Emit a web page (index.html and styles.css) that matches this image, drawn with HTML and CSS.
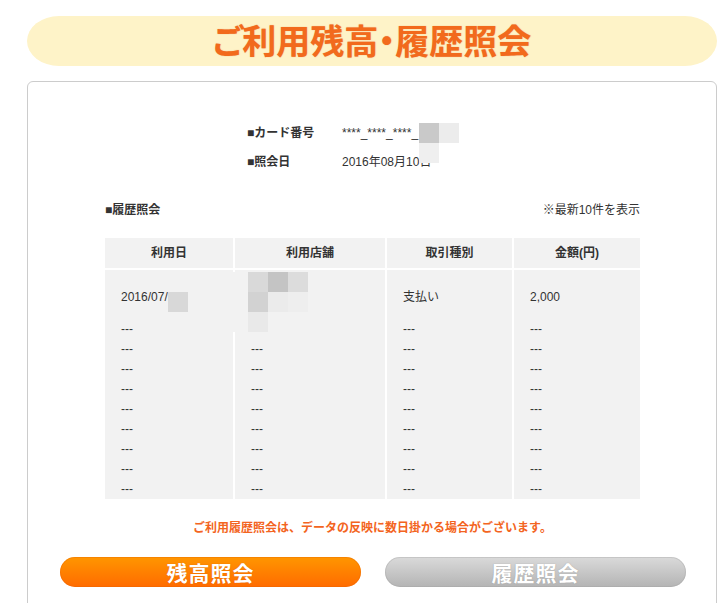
FILE: index.html
```html
<!DOCTYPE html>
<html lang="ja">
<head>
<meta charset="utf-8">
<title>ご利用残高・履歴照会</title>
<link rel="stylesheet" href="styles.css">
</head>
<body>
<div class="page">
  <h1 class="title">ご利用残高・履歴照会</h1>
  <div class="card">
    <div class="info">
      <div class="info-row"><span class="info-label">■カード番号</span><span class="info-value">****_****_****_</span></div>
      <div class="info-row"><span class="info-label">■照会日</span><span class="info-value">2016年08月10日</span></div>
      <div class="mosaic mosaic-card">
        <i class="m c9"></i><i class="m ec"></i>
        <i class="m ef"></i><i class="m none"></i>
      </div>
    </div>
    <div class="history-head">
      <span class="history-title">■履歴照会</span>
      <span class="history-note">※最新10件を表示</span>
    </div>
    <div class="table-wrap">
      <table class="history">
        <colgroup><col class="c-date"><col class="c-shop"><col class="c-type"><col class="c-amount"></colgroup>
        <thead>
          <tr><th>利用日</th><th>利用店舗</th><th>取引種別</th><th>金額(円)</th></tr>
        </thead>
        <tbody>
          <tr class="first"><td>2016/07/</td><td></td><td>支払い</td><td>2,000</td></tr>
          <tr><td>---</td><td>---</td><td>---</td><td>---</td></tr>
          <tr><td>---</td><td>---</td><td>---</td><td>---</td></tr>
          <tr><td>---</td><td>---</td><td>---</td><td>---</td></tr>
          <tr><td>---</td><td>---</td><td>---</td><td>---</td></tr>
          <tr><td>---</td><td>---</td><td>---</td><td>---</td></tr>
          <tr><td>---</td><td>---</td><td>---</td><td>---</td></tr>
          <tr><td>---</td><td>---</td><td>---</td><td>---</td></tr>
          <tr><td>---</td><td>---</td><td>---</td><td>---</td></tr>
          <tr><td>---</td><td>---</td><td>---</td><td>---</td></tr>
        </tbody>
      </table>
      <div class="mosaic mosaic-date"><i class="m d8"></i></div>
      <div class="mosaic mosaic-shop">
        <i class="m f2"></i><i class="m d9"></i><i class="m c4"></i><i class="m dc"></i>
        <i class="m f2"></i><i class="m d2"></i><i class="m eb"></i><i class="m ee"></i>
        <i class="m f2"></i><i class="m e9"></i><i class="m f2"></i><i class="m f2"></i>
      </div>
    </div>
    <p class="notice">ご利用履歴照会は、データの反映に数日掛かる場合がございます。</p>
    <div class="buttons">
      <button class="btn btn-balance" type="button">残高照会</button>
      <button class="btn btn-history" type="button">履歴照会</button>
    </div>
  </div>
</div>
</body>
</html>
```

FILE: styles.css
```css
html, body {
  margin: 0;
  padding: 0;
  background: #ffffff;
}

body {
  font-family: "Liberation Sans", "Noto Sans CJK JP", sans-serif;
  font-size: 12px;
  color: #333333;
}

.page {
  width: 690px;
  margin-left: 27px;
  padding-top: 16px;
}

.title {
  margin: 0;
  height: 50px;
  line-height: 48px;
  background: #fef3c8;
  border-radius: 32px / 25px;
  text-align: center;
  font-family: "Noto Sans CJK JP", sans-serif;
  font-size: 34px;
  font-weight: 700;
  font-feature-settings: "palt";
  color: #f26a1c;
  text-shadow: 0 0 1px rgba(214, 80, 10, 0.5);
}

.card {
  margin-top: 15px;
  border: 1px solid #cccccc;
  border-radius: 6px;
  padding: 41px 76px 40px 77px;
}

.info {
  position: relative;
  margin-left: 142px;
  display: flex;
  flex-direction: column;
  gap: 9px;
}

.info-row {
  display: flex;
  line-height: 20px;
}

.info-label {
  width: 95px;
  font-weight: 700;
}

.mosaic {
  position: absolute;
  display: grid;
  grid-auto-rows: 20px;
}

.mosaic .m {
  display: block;
  width: 20px;
  height: 20px;
}

.mosaic-card {
  left: 172px;
  top: 0;
  grid-template-columns: 20px 20px;
}

.mosaic-date {
  left: 63px;
  top: 54px;
  grid-template-columns: 20px;
}

.mosaic-shop {
  left: 123px;
  top: 34px;
  grid-template-columns: 20px 20px 20px 20px;
}

.m.c9 { background: #c9c9c9; }
.m.ec { background: #ececec; }
.m.ef { background: #efefef; }
.m.none { background: transparent; }
.m.d8 { background: #d8d8d8; }
.m.f2 { background: #f2f2f2; }
.m.d9 { background: #d9d9d9; }
.m.c4 { background: #c4c4c4; }
.m.dc { background: #dcdcdc; }
.m.d2 { background: #d2d2d2; }
.m.eb { background: #ebebeb; }
.m.ee { background: #eeeeee; }
.m.e9 { background: #e9e9e9; }

.history-head {
  margin-top: 28px;
  display: flex;
  justify-content: space-between;
  line-height: 20px;
}

.history-title {
  font-weight: 700;
}

.table-wrap {
  position: relative;
  margin-top: 18px;
}

.history {
  width: 535px;
  table-layout: fixed;
  border-collapse: separate;
  border-spacing: 0;
}

.c-date { width: 130px; }
.c-shop { width: 152px; }
.c-type { width: 127px; }
.c-amount { width: 126px; }

.history th,
.history td {
  background: #f2f2f2;
  border-right: 2px solid #ffffff;
  line-height: 20px;
  white-space: nowrap;
}

.history th:last-child,
.history td:last-child {
  border-right: 0;
}

.history th {
  height: 30px;
  padding: 0;
  border-bottom: 2px solid #ffffff;
  font-weight: 700;
  text-align: center;
}

.history td {
  height: 20px;
  padding: 0 0 0 16px;
  text-align: left;
}

.history tr.first td {
  padding-top: 17px;
  padding-bottom: 12px;
}

.notice {
  margin: 19px 0 0;
  line-height: 20px;
  text-align: center;
  font-weight: 700;
  color: #f36421;
}

.buttons {
  margin: 19px -46px 0 -45px;
  display: flex;
  justify-content: space-between;
}

.btn {
  width: 301px;
  height: 30px;
  padding: 0;
  border: 0;
  border-radius: 15px;
  font-family: "Noto Sans CJK JP", sans-serif;
  font-size: 21px;
  font-weight: 700;
  line-height: 30px;
  letter-spacing: 1px;
  color: #ffffff;
}

.btn-balance {
  background: linear-gradient(#ff9600, #ff6b00);
  box-shadow: inset 0 0 0 1px rgba(230, 100, 0, 0.35);
  text-shadow: 0 0 1px rgba(180, 70, 0, 0.6);
}

.btn-history {
  background: linear-gradient(#dadada, #b4b4b4);
  box-shadow: inset 0 0 0 1px rgba(160, 160, 160, 0.35);
  text-shadow: 0 0 1px rgba(110, 110, 110, 0.6);
}
```
